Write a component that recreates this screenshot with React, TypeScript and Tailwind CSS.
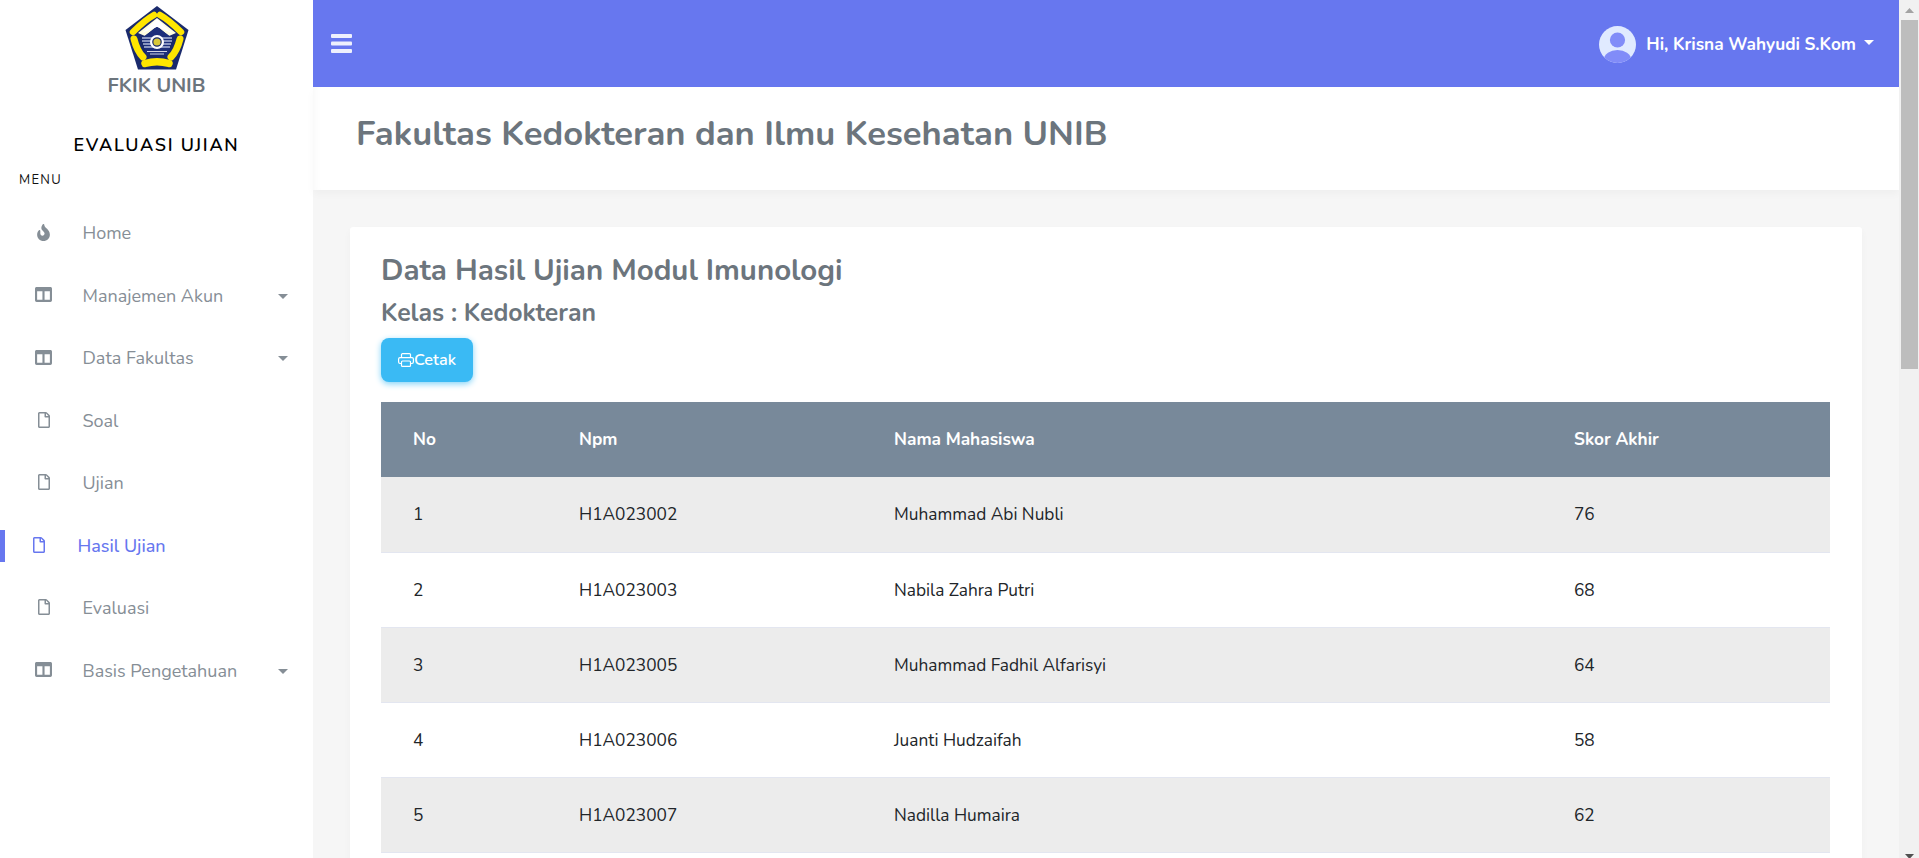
import { FaFire, FaColumns, FaRegFile } from "react-icons/fa";

function Logo() {
  return (
    <svg width="64" height="64" viewBox="0 0 64 64" className="block">
      <polygon points="32,0 63.5,24 51,63.5 13,63.5 0.5,24" fill="#1a2a6c" />
      <path d="M32 12 L13 27 L20 30 L32 20 L44 30 L51 27 Z" fill="#fffde0" />
      <path d="M32 13 L17 27 L32 21 L47 27 Z" fill="#ffffff" />
      <polygon points="32,21 46,31 43,49 21,49 18,31" fill="#1d2f7a" />
      <g stroke="#ffe600" strokeLinecap="round" fill="none">
        <path d="M8 26 Q20 14 29 9" strokeWidth="6.5" />
        <path d="M35 9 Q44 14 56 26" strokeWidth="6.5" />
        <path d="M9 33 Q12 45 18 51" strokeWidth="7" />
        <path d="M55 33 Q52 45 46 51" strokeWidth="7" />
        <path d="M20 57.5 Q32 54 44 57.5" strokeWidth="7.5" />
      </g>
      <g stroke="#d6dcf2" strokeWidth="1.2">
        <path d="M17 32 H47" />
        <path d="M17 35 H47" />
        <path d="M18 38 H46" />
        <path d="M19 41 H45" />
      </g>
      <circle cx="32" cy="36" r="7" fill="#ffffff" />
      <circle cx="32" cy="36" r="4.2" fill="#d8c838" stroke="#1a2a6c" strokeWidth="1.2" />
      <path d="M22 45.5 H42 M25 48 H39" stroke="#ffffff" strokeWidth="0.8" />
    </svg>
  );
}

function Caret({ color = "#858e96", w = 5 }: { color?: string; w?: number }) {
  return (
    <svg width={w * 2} height={w} viewBox="0 0 10 5" className="block">
      <path d="M0 0 H10 L5 5 Z" fill={color} />
    </svg>
  );
}

type Item = { label: string; icon: "flame" | "cols" | "file"; caret?: boolean; active?: boolean };

const items: Item[] = [
  { label: "Home", icon: "flame" },
  { label: "Manajemen Akun", icon: "cols", caret: true },
  { label: "Data Fakultas", icon: "cols", caret: true },
  { label: "Soal", icon: "file" },
  { label: "Ujian", icon: "file" },
  { label: "Hasil Ujian", icon: "file", active: true },
  { label: "Evaluasi", icon: "file" },
  { label: "Basis Pengetahuan", icon: "cols", caret: true },
];

const rows = [
  ["1", "H1A023002", "Muhammad Abi Nubli", "76"],
  ["2", "H1A023003", "Nabila Zahra Putri", "68"],
  ["3", "H1A023005", "Muhammad Fadhil Alfarisyi", "64"],
  ["4", "H1A023006", "Juanti Hudzaifah", "58"],
  ["5", "H1A023007", "Nadilla Humaira", "62"],
];

function NavRow({ item }: { item: Item }) {
  const color = item.active ? "#6777ef" : "#858e96";
  const Icon = item.icon === "flame" ? FaFire : item.icon === "cols" ? FaColumns : FaRegFile;
  return (
    <div className={`relative flex h-[62.5px] items-center ${item.active ? "pl-[30px]" : "pl-[35px]"} pr-[25px]`}>
      {item.active && <div className="absolute left-0 top-[15px] h-[32px] w-[5px] bg-[#6777ef]" />}
      <div className="mb-[3px] flex w-[17px] justify-center">
        <Icon color={color} size={item.icon === "file" ? 16 : 17} />
      </div>
      <span
        className={`ml-[30.5px] flex-1 text-[18px] ${item.active ? "font-medium text-[#6777ef]" : "text-[#868e96]"}`}
      >
        {item.label}
      </span>
      {item.caret && <Caret />}
    </div>
  );
}

export default function App() {
  return (
    <div className="flex h-[858px] w-[1919px] overflow-hidden bg-[#f6f6f6] [font-family:Nunito,'Noto_Sans',sans-serif]">
      <aside className="flex h-full w-[313px] shrink-0 flex-col bg-white">
        <div className="flex flex-col items-center pt-[6px]">
          <Logo />
          <div className="mt-[3px] text-[20px] leading-[26px] font-bold text-[#6c757d]">FKIK UNIB</div>
        </div>
        <div className="mt-[34px] text-center text-[18px] leading-[24px] font-semibold tracking-[1.7px] text-black">
          EVALUASI UJIAN
        </div>
        <div className="mt-[14px] pl-[19px] text-[13px] leading-[18px] font-normal tracking-[1.3px] text-[#111]">MENU</div>
        <nav className="mt-[13.5px] flex flex-col">
          {items.map((i) => (
            <NavRow key={i.label} item={i} />
          ))}
        </nav>
      </aside>

      <main className="flex h-full min-w-0 flex-1 flex-col">
        <header className="flex h-[87px] shrink-0 items-center justify-between bg-[#6777ef] pr-[25px] pl-[18px]">
          <svg width="21" height="19" viewBox="0 0 21 19">
            <rect x="0" y="0" width="21" height="4" rx="1" fill="#eef0fd" />
            <rect x="0" y="7.5" width="21" height="4" rx="1" fill="#eef0fd" />
            <rect x="0" y="15" width="21" height="4" rx="1" fill="#eef0fd" />
          </svg>
          <div className="flex items-center pt-[2px]">
            <svg width="37" height="37" viewBox="0 0 37 37">
              <defs>
                <clipPath id="av">
                  <circle cx="18.5" cy="18.5" r="18.5" />
                </clipPath>
              </defs>
              <circle cx="18.5" cy="18.5" r="18.5" fill="#e0eaff" />
              <g clipPath="url(#av)" fill="#818cf8">
                <circle cx="18.5" cy="14" r="7.6" />
                <ellipse cx="18.5" cy="33" rx="13.5" ry="9" />
              </g>
            </svg>
            <span className="ml-[10px] text-[17.3px] font-bold text-white">Hi, Krisna Wahyudi S.Kom</span>
            <span className="mb-[4px] ml-[8px]">
              <Caret color="#ffffff" w={5} />
            </span>
          </div>
        </header>

        <div className="flex h-[103px] shrink-0 items-center bg-white pb-[9px] pl-[43px] shadow-[0_4px_8px_rgba(0,0,0,0.03),inset_8px_0_8px_-6px_rgba(0,0,0,0.03)]">
          <h1 className="text-[34.6px] leading-[40px] font-bold text-[#6c757d]">
            Fakultas Kedokteran dan Ilmu Kesehatan UNIB
          </h1>
        </div>

        <div className="min-h-0 flex-1 overflow-hidden pt-[37px] pr-[37px] pl-[37px]">
          <section className="rounded-[3px] bg-white pt-[26px] pr-[32px] pb-[20px] pl-[31px] shadow-[0_4px_8px_rgba(0,0,0,0.03)]">
            <h2 className="text-[29.45px] leading-[34px] font-bold text-[#6c757d]">Data Hasil Ujian Modul Imunologi</h2>
            <h3 className="mt-[11px] text-[24.8px] leading-[30px] font-bold text-[#6c757d]">Kelas : Kedokteran</h3>
            <button className="mt-[10px] flex h-[44px] w-[92px] items-center justify-center rounded-[8px] bg-[#3abaf4] text-[16.2px] font-semibold text-white shadow-[0_2px_6px_#82d3f8]">
              <svg width="16" height="14" viewBox="0 0 16 14" fill="none" stroke="#fff" strokeWidth="1.2">
                <path d="M3.5 4.5 V1.6 C3.5 1 4 .6 4.6 .6 H11.4 C12 .6 12.5 1 12.5 1.6 V4.5" />
                <path d="M3.5 10.5 H2 C1.2 10.5 .6 9.9 .6 9.1 V6 C.6 5.2 1.2 4.6 2 4.6 H14 C14.8 4.6 15.4 5.2 15.4 6 V9.1 C15.4 9.9 14.8 10.5 14 10.5 H12.5" />
                <rect x="3.5" y="8" width="9" height="5.4" rx="1" />
              </svg>
              Cetak
            </button>

            <table className="mt-[20px] w-full border-collapse text-left text-[17.3px]">
              <thead>
                <tr className="h-[75px] bg-[#78899a] text-white">
                  <th className="w-[166px] pt-[1px] pl-[32px] font-bold">No</th>
                  <th className="w-[315px] pt-[1px] pl-[32px] font-bold">Npm</th>
                  <th className="w-[680px] pt-[1px] pl-[32px] font-bold">Nama Mahasiswa</th>
                  <th className="pt-[1px] pl-[32px] font-bold">Skor Akhir</th>
                </tr>
              </thead>
              <tbody className="text-[#212529]">
                {rows.map((r, idx) => (
                  <tr key={r[0]} className={`h-[75px] border-b border-[#e3e6f0] ${idx % 2 === 0 ? "bg-[#ececec]" : "bg-white"}`}>
                    {r.map((c, j) => (
                      <td key={j} className="pt-[2px] pl-[32px]">
                        {c}
                      </td>
                    ))}
                  </tr>
                ))}
              </tbody>
            </table>
          </section>
        </div>
      </main>

      <div className="flex h-full w-[20px] shrink-0 flex-col items-end overflow-hidden bg-[#f1f1f1] pr-[1px]">
        <div className="flex h-[20px] w-[17px] shrink-0 items-center justify-center pt-[1px]">
          <svg width="9" height="5" viewBox="0 0 9 5">
            <path d="M4.5 0 L9 5 H0 Z" fill="#a3a3a3" />
          </svg>
        </div>
        <div className="h-[349px] w-[17px] shrink-0 bg-[#bdbdbd]" />
        <div className="flex-1" />
        <div className="flex h-[4px] w-[17px] shrink-0 items-start justify-center">
          <svg width="9" height="5" viewBox="0 0 9 5" className="shrink-0">
            <path d="M0 0 H9 L4.5 5 Z" fill="#505050" />
          </svg>
        </div>
      </div>
    </div>
  );
}
